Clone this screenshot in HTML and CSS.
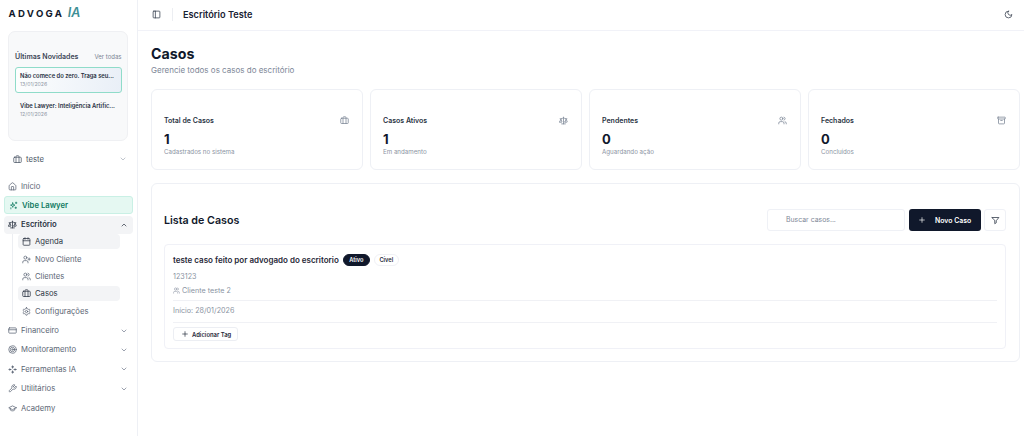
FILE: index.html
```html
<!DOCTYPE html>
<html>
<head>
  <meta charset="utf-8">
  <title>Casos</title>
  <link rel="stylesheet" href="styles.css">
</head>
<body>
  <svg class="defs" width="0" height="0">
    <defs>
      <symbol id="i-case" viewBox="0 0 24 24"><path d="M16 20V4a2 2 0 0 0-2-2h-4a2 2 0 0 0-2 2v16"/><rect x="2" y="6" width="20" height="14" rx="2"/></symbol>
      <symbol id="i-scale" viewBox="0 0 24 24"><path d="m16 16 3-8 3 8c-.9.7-1.9 1-3 1s-2.100-.3-3-1Z"/><path d="m2 16 3-8 3 8c-.9.7-1.900 1-3 1s-2.100-.3-3-1Z"/><path d="M7 21h10"/><path d="M12 3v18"/><path d="M3 7h2c2 0 5-1 7-2 2 1 5 2 7 2h2"/></symbol>
      <symbol id="i-users" viewBox="0 0 24 24"><path d="M16 21v-2a4 4 0 0 0-4-4H6a4 4 0 0 0-4 4v2"/><circle cx="9" cy="7" r="4"/><path d="M22 21v-2a4 4 0 0 0-3-3.870"/><path d="M16 3.130a4 4 0 0 1 0 7.750"/></symbol>
      <symbol id="i-down" viewBox="0 0 24 24"><path d="m6 9 6 6 6-6"/></symbol>
      <symbol id="i-plus" viewBox="0 0 24 24"><path d="M5 12h14"/><path d="M12 5v14"/></symbol>
      <symbol id="i-gear" viewBox="0 0 24 24"><circle cx="12" cy="12" r="3"/><path d="M12.200 2h-.4a2 2 0 0 0-2 2v.2a2 2 0 0 1-1 1.700l-.4.300a2 2 0 0 1-2 0l-.2-.1a2 2 0 0 0-2.700.7l-.2.400a2 2 0 0 0 .7 2.700l.2.100a2 2 0 0 1 1 1.700v.6a2 2 0 0 1-1 1.700l-.2.100a2 2 0 0 0-.7 2.700l.2.400a2 2 0 0 0 2.700.7l.2-.1a2 2 0 0 1 2 0l.4.300a2 2 0 0 1 1 1.700v.2a2 2 0 0 0 2 2h.4a2 2 0 0 0 2-2v-.2a2 2 0 0 1 1-1.700l.4-.3a2 2 0 0 1 2 0l.2.100a2 2 0 0 0 2.700-.7l.2-.4a2 2 0 0 0-.7-2.700l-.2-.1a2 2 0 0 1-1-1.700v-.6a2 2 0 0 1 1-1.700l.2-.1a2 2 0 0 0 .7-2.700l-.2-.4a2 2 0 0 0-2.700-.7l-.2.100a2 2 0 0 1-2 0l-.4-.3a2 2 0 0 1-1-1.700V4a2 2 0 0 0-2-2Z"/></symbol>
    </defs>
  </svg>

  <div class="app">
    <aside class="sidebar">
      <div class="logo">ADVOGA <em>IA</em></div>

      <section class="news">
        <div class="news_head">
          <span class="news_title">Últimas Novidades</span>
          <span class="news_all">Ver todas</span>
        </div>
        <div class="news_item news_item_on">
          <div class="news_name">Não comece do zero. Traga seu...</div>
          <div class="news_date">13/01/2026</div>
        </div>
        <div class="news_item">
          <div class="news_name">Vibe Lawyer: Inteligência Artific...</div>
          <div class="news_date">12/01/2026</div>
        </div>
      </section>

      <div class="team">
        <svg class="ic"><use href="#i-case"/></svg>
        <span>teste</span>
        <svg class="ic chev light"><use href="#i-down"/></svg>
      </div>

      <nav class="nav">
        <a class="nav_row">
          <svg class="ic" viewBox="0 0 24 24"><path d="M15 21v-8a1 1 0 0 0-1-1h-4a1 1 0 0 0-1 1v8"/><path d="M3 10a2 2 0 0 1 .7-1.500l7-6a2 2 0 0 1 2.600 0l7 6a2 2 0 0 1 .7 1.500v9a2 2 0 0 1-2 2H5a2 2 0 0 1-2-2z"/></svg>
          Início
        </a>
        <a class="nav_row nav_vibe">
          <svg class="ic" viewBox="0 0 24 24"><path d="M10 5l1.500 4.500L16 11l-4.500 1.500L10 17l-1.500-4.500L4 11l4.500-1.500z"/><path d="M19 3v4"/><path d="M17 5h4"/><path d="M18 16v4"/><path d="M16 18h4"/><path d="M5 18v3"/></svg>
          Vibe Lawyer
        </a>
        <a class="nav_row nav_open">
          <svg class="ic"><use href="#i-scale"/></svg>
          Escritório
          <svg class="ic chev up"><use href="#i-down"/></svg>
        </a>
        <div class="subnav">
          <a class="sub_row sub_on">
            <svg class="ic" viewBox="0 0 24 24"><path d="M8 2v4"/><path d="M16 2v4"/><rect x="3" y="4" width="18" height="18" rx="2"/><path d="M3 10h18"/></svg>
            Agenda
          </a>
          <a class="sub_row">
            <svg class="ic" viewBox="0 0 24 24"><path d="M16 21v-2a4 4 0 0 0-4-4H6a4 4 0 0 0-4 4v2"/><circle cx="9" cy="7" r="4"/><path d="M19 8v6"/><path d="M22 11h-6"/></svg>
            Novo Cliente
          </a>
          <a class="sub_row">
            <svg class="ic"><use href="#i-users"/></svg>
            Clientes
          </a>
          <a class="sub_row sub_on">
            <svg class="ic"><use href="#i-case"/></svg>
            Casos
          </a>
          <a class="sub_row">
            <svg class="ic"><use href="#i-gear"/></svg>
            Configurações
          </a>
        </div>
        <a class="nav_row">
          <svg class="ic" viewBox="0 0 24 24"><rect x="2" y="5" width="20" height="14" rx="2"/><path d="M2 10h20"/></svg>
          Financeiro
          <svg class="ic chev"><use href="#i-down"/></svg>
        </a>
        <a class="nav_row">
          <svg class="ic" viewBox="0 0 24 24"><circle cx="12" cy="12" r="10"/><circle cx="12" cy="12" r="6"/><circle cx="12" cy="12" r="2"/></svg>
          Monitoramento
          <svg class="ic chev"><use href="#i-down"/></svg>
        </a>
        <a class="nav_row">
          <svg class="ic" viewBox="0 0 24 24"><path d="M12 3v5"/><path d="M12 16v5"/><path d="M3 12h5"/><path d="M16 12h5"/><circle cx="12" cy="5" r="2"/><circle cx="5" cy="12" r="2"/><circle cx="19" cy="12" r="2"/><circle cx="12" cy="19" r="2"/></svg>
          Ferramentas IA
          <svg class="ic chev"><use href="#i-down"/></svg>
        </a>
        <a class="nav_row">
          <svg class="ic" viewBox="0 0 24 24"><path d="M14.700 6.300a1 1 0 0 0 0 1.400l1.600 1.600a1 1 0 0 0 1.400 0l3.770-3.770a6 6 0 0 1-7.940 7.940l-6.910 6.910a2.120 2.120 0 0 1-3-3l6.910-6.910a6 6 0 0 1 7.940-7.940l-3.760 3.760z"/></svg>
          Utilitários
          <svg class="ic chev"><use href="#i-down"/></svg>
        </a>
        <a class="nav_row">
          <svg class="ic" viewBox="0 0 24 24"><path d="M22 10 12 5 2 10l10 5 10-5z"/><path d="M6 12.500V16c3 3 9 3 12 0v-3.500"/></svg>
          Academy
        </a>
      </nav>
    </aside>

    <div class="main">
      <header class="topbar">
        <svg class="ic top_ic" viewBox="0 0 24 24"><rect x="3" y="3" width="18" height="18" rx="2"/><path d="M9 3v18"/></svg>
        <span class="top_sep"></span>
        <span class="top_title">Escritório Teste</span>
        <svg class="ic top_moon" viewBox="0 0 24 24"><path d="M12 3a6 6 0 0 0 9 9 9 9 0 1 1-9-9Z"/></svg>
      </header>

      <main class="content">
        <h1>Casos</h1>
        <p class="lead">Gerencie todos os casos do escritório</p>

        <div class="stats">
          <div class="stat">
            <div class="stat_top"><span>Total de Casos</span><svg class="ic"><use href="#i-case"/></svg></div>
            <div class="stat_num">1</div>
            <div class="stat_sub">Cadastrados no sistema</div>
          </div>
          <div class="stat">
            <div class="stat_top"><span>Casos Ativos</span><svg class="ic"><use href="#i-scale"/></svg></div>
            <div class="stat_num">1</div>
            <div class="stat_sub">Em andamento</div>
          </div>
          <div class="stat">
            <div class="stat_top"><span>Pendentes</span><svg class="ic"><use href="#i-users"/></svg></div>
            <div class="stat_num">0</div>
            <div class="stat_sub">Aguardando ação</div>
          </div>
          <div class="stat">
            <div class="stat_top"><span>Fechados</span><svg class="ic" viewBox="0 0 24 24"><rect x="2" y="3" width="20" height="5" rx="1"/><path d="M4 8v11a2 2 0 0 0 2 2h12a2 2 0 0 0 2-2V8"/><path d="M10 12h4"/></svg></div>
            <div class="stat_num">0</div>
            <div class="stat_sub">Concluídos</div>
          </div>
        </div>

        <section class="panel">
          <div class="panel_head">
            <h2>Lista de Casos</h2>
            <div class="search">Buscar casos...</div>
            <button class="btn_new"><svg class="ic"><use href="#i-plus"/></svg>Novo Caso</button>
            <button class="btn_filter">
              <svg class="ic" viewBox="0 0 24 24"><path d="M3 4h18l-7 8.500V18l-4 2.500v-8z"/></svg>
            </button>
          </div>

          <article class="case">
            <div class="case_title">
              <span>teste caso feito por advogado do escritorio</span>
              <span class="tag tag_dark">Ativo</span>
              <span class="tag">Cível</span>
            </div>
            <div class="case_num">123123</div>
            <div class="case_client"><svg class="ic"><use href="#i-users"/></svg>Cliente teste 2</div>
            <div class="case_date">Início: 28/01/2026</div>
            <div class="case_foot">
              <button class="btn_tag"><svg class="ic"><use href="#i-plus"/></svg>Adicionar Tag</button>
            </div>
          </article>
        </section>
      </main>
    </div>
  </div>
</body>
</html>
```

FILE: styles.css
```css
* {
  box-sizing: border-box;
}
html, body {
  height: 100%;
}
body {
  margin: 0;
  background: #fff;
  color: #0f172a;
  font-family: Inter, "Liberation Sans", sans-serif;
  overflow: hidden;
}
.defs {
  position: absolute;
}
.ic {
  width: 9px;
  height: 9px;
  flex: none;
  fill: none;
  stroke: currentColor;
  stroke-width: 2;
  stroke-linecap: round;
  stroke-linejoin: round;
}
.app {
  display: flex;
  height: 436px;
}

/* sidebar */
.sidebar {
  width: 138px;
  flex: none;
  border-right: 1px solid #eef0f5;
  padding: 6px 4px 0;
}
.logo {
  height: 13px;
  margin-left: 4.500px;
  font-size: 9.600px;
  line-height: 13px;
  font-weight: 700;
  letter-spacing: 2.300px;
  color: #10182b;
  white-space: nowrap;
}
.logo em {
  font-weight: 600;
  letter-spacing: 0;
  font-size: 12.500px;
  margin-left: -1px;
  color: #3f8f96;
}
.news {
  width: 120px;
  height: 110px;
  margin: 12px 0 0 4px;
  padding: 19px 5.500px 0 6px;
  background: #f8f9fa;
  border: 1px solid #eff0f3;
  border-radius: 7px;
}
.news_head {
  display: flex;
  justify-content: space-between;
  align-items: center;
  height: 10px;
  margin-bottom: 6px;
}
.news_title {
  font-size: 7px;
  font-weight: 600;
  color: #3d4657;
}
.news_all {
  font-size: 6px;
  color: #7b8494;
}
.news_item {
  height: 26px;
  padding: 5px 5px;
  margin-bottom: 4px;
  overflow: hidden;
}
.news_item_on {
  background: linear-gradient(100deg, #fdfefe, #e9eff7);
  border: 1px solid #8fdcc9;
  border-radius: 3px;
  padding: 4px 4px;
}
.news_name {
  font-size: 5.800px;
  line-height: 8px;
  font-weight: 600;
  color: #262f40;
  white-space: nowrap;
}
.news_date {
  font-size: 5.200px;
  line-height: 7px;
  margin-top: 1px;
  color: #8f97a5;
}
.team {
  display: flex;
  align-items: center;
  gap: 4px;
  height: 12px;
  margin: 12px 0 0 9px;
  padding-right: 6px;
  font-size: 7.700px;
  color: #4b5565;
}
.chev {
  margin-left: auto;
  width: 8px;
  height: 8px;
  color: #697386;
}
.chev.light {
  color: #a0a7b4;
}
.chev.up {
  transform: rotate(180deg);
  color: #1f2937;
}
.nav {
  display: flex;
  flex-direction: column;
  margin-top: 11.500px;
}
.nav_row {
  display: flex;
  align-items: center;
  gap: 4px;
  height: 19.400px;
  padding: 0 5px 0 4px;
  font-size: 7.700px;
  color: #5c6675;
}
.nav_vibe {
  height: 17.500px;
  margin: 0.500px 0 2px;
  background: #e5f8f2;
  border: 1px solid #c9f0e5;
  border-radius: 3px;
  font-weight: 600;
  color: #0f7a61;
}
.nav_open {
  height: 18px;
  background: #f3f4f6;
  border-radius: 4px;
  font-weight: 600;
  color: #2b3443;
}
.subnav {
  display: flex;
  flex-direction: column;
  margin: 0.500px 0 0 8px;
  padding-left: 5px;
  width: 108px;
  border-left: 1px solid #eceef2;
}
.sub_row {
  display: flex;
  align-items: center;
  gap: 4px;
  height: 15px;
  margin-bottom: 2.300px;
  padding-left: 4px;
  font-size: 7.700px;
  color: #5c6675;
}
.sub_on {
  background: #f3f4f6;
  border-radius: 4px;
  color: #2b3443;
}

/* main */
.main {
  flex: 1;
  min-width: 0;
}
.topbar {
  display: flex;
  align-items: center;
  height: 31px;
  padding: 0 11px 2px 14px;
  border-bottom: 1.500px solid #f1f2f8;
}
.top_ic {
  color: #333c4b;
}
.top_sep {
  width: 1px;
  height: 13px;
  margin: 0 10px 0 11px;
  background: #eceef2;
}
.top_title {
  font-size: 9.200px;
  font-weight: 600;
  color: #1a2233;
}
.top_moon {
  margin-left: auto;
  color: #333c4b;
}
.content {
  padding: 14px 4px 0 13px;
}
h1 {
  margin: 0;
  font-size: 14.200px;
  line-height: 18px;
  font-weight: 700;
  color: #10182b;
}
.lead {
  margin: 1px 0 0;
  font-size: 8px;
  line-height: 12px;
  color: #7d8797;
}
.stats {
  display: grid;
  grid-template-columns: repeat(4, 1fr);
  gap: 7px;
  margin-top: 13px;
}
.stat {
  height: 81px;
  padding: 25px 13px 0 12px;
  background: #fff;
  border: 1px solid #eef0f5;
  border-radius: 6px;
}
.stat_top {
  display: flex;
  justify-content: space-between;
  align-items: center;
  height: 11px;
  font-size: 7px;
  font-weight: 600;
  color: #2a3343;
}
.stat_top .ic {
  color: #7a8494;
}
.stat_num {
  margin-top: 4.500px;
  font-size: 13px;
  line-height: 16px;
  font-weight: 700;
  color: #10182b;
}
.stat_sub {
  font-size: 6.200px;
  line-height: 8px;
  margin-top: 1.500px;
  color: #8a93a2;
}
.panel {
  height: 179px;
  margin-top: 13px;
  padding: 25px 13px 0 12px;
  border: 1px solid #eef0f5;
  border-radius: 6px;
}
.panel_head {
  display: flex;
  align-items: center;
  height: 22px;
}
h2 {
  margin: 0 auto 0 0;
  font-size: 10.700px;
  font-weight: 600;
  color: #10182b;
}
.search {
  width: 138px;
  height: 22px;
  padding-left: 18px;
  border: 1px solid #eff1f6;
  border-radius: 3px;
  font-size: 6.900px;
  line-height: 20px;
  color: #7d8797;
}
.btn_new {
  display: flex;
  align-items: center;
  gap: 9px;
  width: 72px;
  height: 22px;
  margin-left: 4px;
  padding: 0 0 0 9px;
  border: 0;
  border-radius: 3px;
  background: #10182b;
  color: #fff;
  font: 600 6.900px Inter, "Liberation Sans", sans-serif;
}
.btn_new .ic {
  width: 8px;
  height: 8px;
}
.btn_filter {
  display: flex;
  align-items: center;
  justify-content: center;
  width: 22px;
  height: 22px;
  margin-left: 3px;
  padding: 0;
  background: #fff;
  border: 1px solid #eff1f6;
  border-radius: 3px;
  color: #2a3343;
}
.case {
  height: 105px;
  margin-top: 13px;
  padding: 8px 8px 0;
  border: 1px solid #f0f1f7;
  border-radius: 4px;
}
.case_title {
  display: flex;
  align-items: center;
  gap: 4px;
  height: 13px;
  font-size: 8px;
  font-weight: 600;
  color: #1f2737;
}
.tag {
  width: 25px;
  height: 12px;
  border: 1px solid #f0f1f5;
  border-radius: 7px;
  font-size: 5.700px;
  line-height: 10px;
  font-weight: 600;
  text-align: center;
  color: #1f2737;
}
.tag_dark {
  width: 27px;
  background: #10182b;
  border-color: #10182b;
  color: #fff;
}
.case_num {
  margin-top: 5px;
  font-size: 7.200px;
  line-height: 12px;
  color: #8a93a2;
}
.case_client {
  display: flex;
  align-items: center;
  gap: 2px;
  margin-top: 1px;
  height: 12px;
  font-size: 7.200px;
  color: #8a93a2;
}
.case_client .ic {
  width: 7px;
  height: 7px;
}
.case_date {
  margin-top: 4px;
  padding-top: 4px;
  height: 22px;
  border-top: 1px solid #f0f1f5;
  font-size: 7.200px;
  line-height: 12px;
  color: #8a93a2;
}
.case_foot {
  display: flex;
  padding-top: 4px;
  border-top: 1px solid #f0f1f5;
}
.btn_tag {
  display: flex;
  align-items: center;
  gap: 3px;
  width: 65px;
  height: 14px;
  padding: 0 0 0 7px;
  background: #fff;
  border: 1px solid #eceef3;
  border-radius: 3px;
  color: #1f2737;
  font: 600 5.900px Inter, "Liberation Sans", sans-serif;
}
.btn_tag .ic {
  width: 8px;
  height: 8px;
}
```
